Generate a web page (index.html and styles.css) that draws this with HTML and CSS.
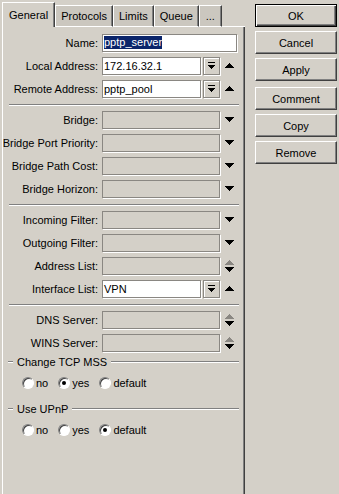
FILE: index.html
```html
<!DOCTYPE html>
<html lang="en">
<head>
    <meta charset="UTF-8">
    <meta name="viewport" content="width=device-width, initial-scale=1.0">
    <title>PPTP Server</title>
    <link rel="stylesheet" href="styles.css">
</head>
<body>

    <div class="window">

        <!-- Tab control with the General page -->
        <div class="tabbox">
            <div class="tabs">
                <div class="tab active">General</div>
                <div class="tab">Protocols</div>
                <div class="tab">Limits</div>
                <div class="tab">Queue</div>
                <div class="tab">...</div>
                <div class="tab-fill"></div>
            </div>

            <div class="panel">
                <div class="row">
                    <span class="label">Name:</span>
                    <div class="field edit wide"><span class="sel">pptp_server</span></div>
                </div>
                <div class="row">
                    <span class="label">Local Address:</span>
                    <div class="field edit short">172.16.32.1</div>
                    <span class="drop-btn"><svg width="7" height="7" viewBox="0 0 7 7"><path d="M0 0h7v1H0z M0 3h7L3.5 7z"/></svg></span>
                    <span class="arrow"><svg width="9" height="5" viewBox="0 0 9 5"><path d="M4.5 0 9 5H0z"/></svg></span>
                </div>
                <div class="row">
                    <span class="label">Remote Address:</span>
                    <div class="field edit short">pptp_pool</div>
                    <span class="drop-btn"><svg width="7" height="7" viewBox="0 0 7 7"><path d="M0 0h7v1H0z M0 3h7L3.5 7z"/></svg></span>
                    <span class="arrow"><svg width="9" height="5" viewBox="0 0 9 5"><path d="M4.5 0 9 5H0z"/></svg></span>
                </div>

                <div class="sep"></div>

                <div class="row">
                    <span class="label">Bridge:</span>
                    <div class="field"></div>
                    <span class="arrow"><svg width="9" height="5" viewBox="0 0 9 5"><path d="M0 0h9L4.5 5z"/></svg></span>
                </div>
                <div class="row">
                    <span class="label">Bridge Port Priority:</span>
                    <div class="field"></div>
                    <span class="arrow"><svg width="9" height="5" viewBox="0 0 9 5"><path d="M0 0h9L4.5 5z"/></svg></span>
                </div>
                <div class="row">
                    <span class="label">Bridge Path Cost:</span>
                    <div class="field"></div>
                    <span class="arrow"><svg width="9" height="5" viewBox="0 0 9 5"><path d="M0 0h9L4.5 5z"/></svg></span>
                </div>
                <div class="row">
                    <span class="label">Bridge Horizon:</span>
                    <div class="field"></div>
                    <span class="arrow"><svg width="9" height="5" viewBox="0 0 9 5"><path d="M0 0h9L4.5 5z"/></svg></span>
                </div>

                <div class="sep"></div>

                <div class="row">
                    <span class="label">Incoming Filter:</span>
                    <div class="field"></div>
                    <span class="arrow"><svg width="9" height="5" viewBox="0 0 9 5"><path d="M0 0h9L4.5 5z"/></svg></span>
                </div>
                <div class="row">
                    <span class="label">Outgoing Filter:</span>
                    <div class="field"></div>
                    <span class="arrow"><svg width="9" height="5" viewBox="0 0 9 5"><path d="M0 0h9L4.5 5z"/></svg></span>
                </div>
                <div class="row">
                    <span class="label">Address List:</span>
                    <div class="field"></div>
                    <span class="arrow"><svg width="9" height="12" viewBox="0 0 9 12"><path fill="#8a8782" d="M4.5 0 9 5H0z"/><path d="M0 7h9L4.5 12z"/></svg></span>
                </div>
                <div class="row">
                    <span class="label">Interface List:</span>
                    <div class="field edit short">VPN</div>
                    <span class="drop-btn"><svg width="7" height="7" viewBox="0 0 7 7"><path d="M0 0h7v1H0z M0 3h7L3.5 7z"/></svg></span>
                    <span class="arrow"><svg width="9" height="5" viewBox="0 0 9 5"><path d="M4.5 0 9 5H0z"/></svg></span>
                </div>

                <div class="sep"></div>

                <div class="row">
                    <span class="label">DNS Server:</span>
                    <div class="field"></div>
                    <span class="arrow"><svg width="9" height="12" viewBox="0 0 9 12"><path fill="#8a8782" d="M4.5 0 9 5H0z"/><path d="M0 7h9L4.5 12z"/></svg></span>
                </div>
                <div class="row">
                    <span class="label">WINS Server:</span>
                    <div class="field"></div>
                    <span class="arrow"><svg width="9" height="12" viewBox="0 0 9 12"><path fill="#8a8782" d="M4.5 0 9 5H0z"/><path d="M0 7h9L4.5 12z"/></svg></span>
                </div>

                <div class="group-head">Change TCP MSS</div>
                <div class="radios">
                    <span class="radio"><span class="dot"></span>no</span>
                    <span class="radio"><span class="dot on"></span>yes</span>
                    <span class="radio"><span class="dot"></span>default</span>
                </div>

                <div class="group-head">Use UPnP</div>
                <div class="radios">
                    <span class="radio"><span class="dot"></span>no</span>
                    <span class="radio"><span class="dot"></span>yes</span>
                    <span class="radio"><span class="dot on"></span>default</span>
                </div>
            </div>
        </div>

        <!-- Dialog buttons -->
        <div class="actions">
            <button class="default">OK</button>
            <button>Cancel</button>
            <button>Apply</button>
            <button class="spaced">Comment</button>
            <button>Copy</button>
            <button>Remove</button>
        </div>

    </div>

</body>
</html>
```

FILE: styles.css
```css
* {
    box-sizing: border-box;
}

body {
    margin: 0;
    height: 494px;
    overflow: hidden;
    background-color: #d4d0c8;
    font-family: "Liberation Sans", Arial, sans-serif;
    font-size: 11px;
    color: #000;
}

.window {
    display: flex;
    align-items: flex-start;
}

/* Tab control (its panel runs on past the bottom of the window) */
.tabbox {
    width: 243px;
    height: 494px;
    margin-left: 2px;
    display: flex;
    flex-direction: column;
}

.tabs {
    display: flex;
    align-items: flex-end;
    height: 27px;
}

.tab {
    height: 22px;
    min-width: 23px;
    padding: 0 5px;
    display: flex;
    align-items: center;
    justify-content: center;
    background-color: #cbc7bf;
    border-top: 1px solid #fff;
    border-left: 1px solid #fff;
    border-right: 1px solid #404040;
    border-bottom: 1px solid #fff;
    box-shadow: inset -1px 0 0 #808080;
    white-space: nowrap;
}

.tab.active {
    height: 25px;
    padding: 0 6px;
    background-color: #d4d0c8;
    border-bottom: 0;
}

.tab-fill {
    flex: 1;
    border-bottom: 1px solid #fff;
}

.panel {
    flex: 1;
    padding-top: 4px;
    border-left: 1px solid #fff;
    border-right: 1px solid #404040;
    box-shadow: inset -1px 0 0 #808080;
}

/* Form rows */
.row {
    display: flex;
    align-items: center;
    height: 23px;
}

.label {
    width: 95px;
    margin-right: 4px;
    flex-shrink: 0;
    display: flex;
    justify-content: flex-end;
    white-space: nowrap;
}

.field {
    width: 118px;
    height: 18px;
    padding: 0 1px;
    display: flex;
    align-items: center;
    border: 1px solid #8a8782;
    box-shadow: 1px 1px 0 #fff;
    background-color: #d4d0c8;
    white-space: nowrap;
    overflow: hidden;
}

.field.edit {
    background-color: #fff;
}

.field.wide {
    width: 135px;
}

.field.short {
    width: 99px;
}

.sel {
    line-height: 13px;
    background-color: #0a246a;
    color: #fff;
}

.drop-btn {
    width: 17px;
    height: 18px;
    margin-left: 2px;
    display: flex;
    align-items: center;
    justify-content: center;
    border: 1px solid #8a8782;
    box-shadow: inset 1px 1px 0 #fff, 1px 1px 0 #fff;
}

.arrow {
    width: 9px;
    margin-left: 5px;
    display: flex;
    align-items: center;
}

svg {
    display: block;
    shape-rendering: crispEdges;
}

.sep {
    margin: 4px 5px 2px 6px;
    border-top: 1px solid #808080;
    border-bottom: 1px solid #fff;
}

/* Radio groups */
.group-head {
    height: 16px;
    padding: 0 5px;
    display: flex;
    align-items: center;
    gap: 4px;
}

.group-head::before,
.group-head::after {
    content: "";
    border-top: 1px solid #808080;
    border-bottom: 1px solid #fff;
}

.group-head::before {
    width: 5px;
}

.group-head::after {
    flex: 1;
}

.radios {
    height: 26px;
    margin-bottom: 5px;
    padding-left: 19px;
    display: flex;
    align-items: center;
}

.radio {
    display: flex;
    align-items: center;
    margin-right: 10px;
}

.dot {
    width: 12px;
    height: 12px;
    margin-right: 2px;
    display: flex;
    align-items: center;
    justify-content: center;
    border-radius: 50%;
    border: 1px solid;
    border-color: #808080 #fff #fff #808080;
    box-shadow: inset 1px 1px 0 #404040;
    background-color: #fff;
}

.dot.on::after {
    content: "";
    width: 4px;
    height: 4px;
    border-radius: 50%;
    background-color: #000;
}

/* Dialog buttons */
.actions {
    width: 82px;
    margin-left: 10px;
    padding-top: 4px;
    display: flex;
    flex-direction: column;
    gap: 4px;
}

.actions button {
    height: 23px;
    padding: 0;
    font: inherit;
    color: #000;
    background-color: #d4d0c8;
    border: 1px solid;
    border-color: #fff #404040 #404040 #fff;
    box-shadow: inset -1px -1px 0 #808080;
}

.actions button.default {
    border: 1px solid #000;
    box-shadow: inset 1px 1px 0 #fff, inset -1px -1px 0 #404040, inset -2px -2px 0 #808080;
}

.actions button.spaced {
    margin-top: 2px;
}
```
